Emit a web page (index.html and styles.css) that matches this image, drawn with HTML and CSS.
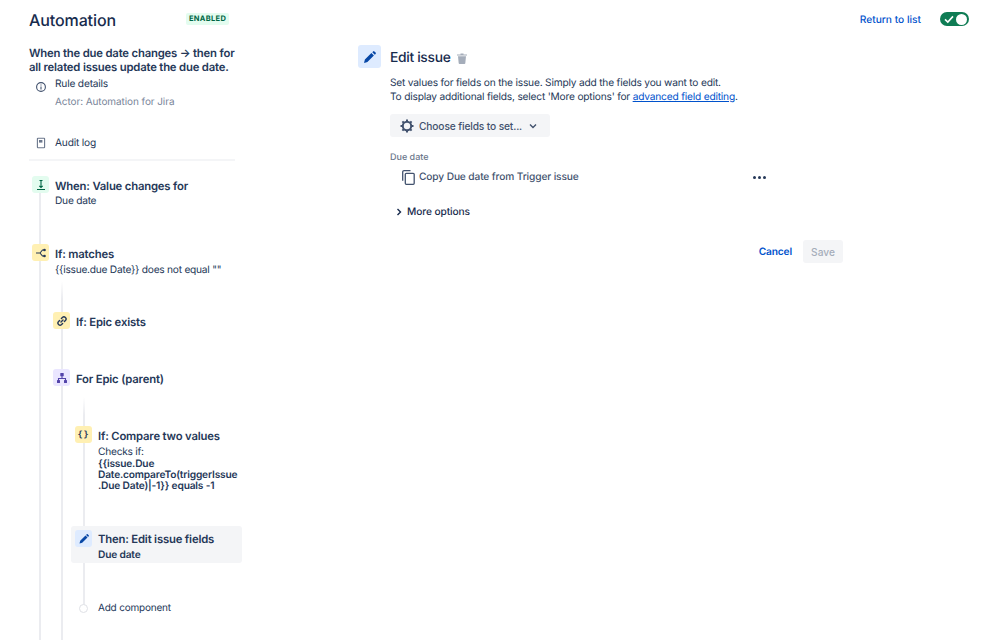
FILE: index.html
```html
<!DOCTYPE html>
<html lang="en">
<head>
<meta charset="utf-8">
<title>Automation</title>
<link rel="stylesheet" href="styles.css">
</head>
<body>
<div class="page">
  <header class="top">
    <div class="top-left">
      <h1 class="app-title">Automation</h1>
      <span class="lozenge">ENABLED</span>
    </div>
    <div class="top-right">
      <a class="link-return">Return to list</a>
      <span class="toggle">
        <svg class="toggle-check" viewBox="0 0 12 12" width="12" height="12"><path d="M2 6.400 4.800 9 10 3.400" fill="none" stroke="#fff" stroke-width="1.600"/></svg>
        <span class="toggle-knob"></span>
      </span>
    </div>
  </header>
  <div class="columns">
    <aside class="side">
      <h2 class="rule-title">When the due date changes → then for all related issues update the due date.</h2>
      <div class="meta-row">
        <svg class="meta-icon" viewBox="0 0 12 12" width="12" height="12"><circle cx="6" cy="6" r="4.400" fill="none" stroke="#42526e" stroke-width="1.100"/><path d="M6 5.400v3M6 3.400v1" stroke="#42526e" stroke-width="1.100"/></svg>
        <div>
          <div class="meta-text">Rule details</div>
          <div class="meta-sub">Actor: Automation for Jira</div>
        </div>
      </div>
      <div class="meta-row audit">
        <svg class="meta-icon" viewBox="0 0 12 12" width="12" height="12"><path d="M3 1.200h6a.6.600 0 0 1 .6.600v8.400a.6.600 0 0 1-.6.600H3a.6.600 0 0 1-.6-.6V1.800a.6.600 0 0 1 .6-.6z" fill="none" stroke="#6b778c" stroke-width="1.100"/><path d="M4 3h3.400v2.600H4z" fill="#6b778c"/></svg>
        <div class="meta-text">Audit log</div>
      </div>
      <div class="divider"></div>

      <div class="tree">
        <div class="node node-trigger">
          <span class="tile tile-green">
            <svg viewBox="0 0 12 12" width="12" height="12"><path d="M2 10.500h8M6 1.500v7M4.300 6.800 6 8.500l1.700-1.700M4.500 1.500h3" fill="none" stroke="#006644" stroke-width="1.100"/></svg>
          </span>
          <div class="node-body">
            <div class="node-title">When: Value changes for</div>
            <div class="node-sub">Due date</div>
          </div>
        </div>

        <div class="node node-match">
          <span class="tile tile-yellow">
            <svg viewBox="0 0 12 12" width="12" height="12"><path d="M1 6h4M5 6l2.500-3H9M5 6l2.500 3H9" fill="none" stroke="#253858" stroke-width="1.100"/><circle cx="9.500" cy="3" r="1.300" fill="#253858"/><circle cx="9.500" cy="9" r="1.300" fill="#253858"/></svg>
          </span>
          <div class="node-body">
            <div class="node-title">If: matches</div>
            <div class="node-sub match-sub">{{issue.due Date}} does not equal ""</div>
          </div>
        </div>

        <div class="branch branch-one">
          <div class="node node-epic">
            <span class="tile tile-yellow">
              <svg viewBox="0 0 12 12" width="12" height="12"><path d="M5 7 7 5M5.400 3.400l1-1a2.100 2.100 0 0 1 3 3l-1 1M6.600 8.600l-1 1a2.100 2.100 0 0 1-3-3l1-1" fill="none" stroke="#253858" stroke-width="1.400" stroke-linecap="round"/></svg>
            </span>
            <div class="node-body"><div class="node-title">If: Epic exists</div></div>
          </div>

          <div class="node node-for">
            <span class="tile tile-purple">
              <svg viewBox="0 0 12 12" width="12" height="12"><path d="M6 4v2.500M2.500 9V6.500h7V9" fill="none" stroke="#5243aa" stroke-width="1.100"/><rect x="4.300" y="1" width="3.400" height="3.200" rx=".5" fill="#5243aa"/><rect x="1" y="8" width="3" height="3" rx=".5" fill="#5243aa"/><rect x="8" y="8" width="3" height="3" rx=".5" fill="#5243aa"/></svg>
            </span>
            <div class="node-body"><div class="node-title">For Epic (parent)</div></div>
          </div>

          <div class="branch branch-two">
            <div class="node node-compare">
              <span class="tile tile-yellow tile-braces">{}</span>
              <div class="node-body">
                <div class="node-title">If: Compare two values</div>
                <div class="node-sub checks">Checks if:</div>
                <div class="node-strong">{{issue.Due<br>Date.compareTo(triggerIssue<br>.Due Date)|-1}} equals -1</div>
              </div>
            </div>

            <div class="node node-then">
              <span class="tile tile-blue">
                <svg viewBox="0 0 12 12" width="12" height="12"><path d="M1.500 10.500l.7-2.700 5.300-5.300 2 2-5.300 5.300zM8.100 1.900l.6-.6a.7.700 0 0 1 1 0l1 1a.7.700 0 0 1 0 1l-.6.600z" fill="#0747a6"/></svg>
              </span>
              <div class="node-body">
                <div class="node-title">Then: Edit issue fields</div>
                <div class="node-strong then-sub">Due date</div>
              </div>
            </div>

            <div class="node node-add">
              <span class="add-dot"></span>
              <div class="add-text">Add component</div>
            </div>
          </div>
        </div>
      </div>
    </aside>

    <main class="main">
      <span class="tile-large">
        <svg viewBox="0 0 14 14" width="14" height="14"><path d="M1 13l.9-3.400 6.500-6.500 2.500 2.500-6.500 6.500zM9.300 2.200l.8-.8a.9.900 0 0 1 1.300 0l1.200 1.200a.9.900 0 0 1 0 1.300l-.8.800z" fill="#0747a6"/></svg>
      </span>
      <div class="panel">
        <div class="panel-head">
          <h2 class="panel-title">Edit issue</h2>
          <svg class="trash" viewBox="0 0 10 11" width="10" height="11"><path d="M0 1.500h10v1H0zM3.500.500h3v1h-3zM1 3.300h8l-.7 6.900a.9.900 0 0 1-.9.800H2.600a.9.900 0 0 1-.9-.8z" fill="#a5adba"/></svg>
        </div>
        <p class="desc">Set values for fields on the issue. Simply add the fields you want to edit.<br>To display additional fields, select 'More options' for <a class="desc-link">advanced field editing</a>.</p>
        <button class="choose" type="button">
          <svg viewBox="0 0 14 14" width="14" height="14"><circle cx="7" cy="7" r="4.200" fill="none" stroke="#42526e" stroke-width="2"/><path d="M7 .5v2.200M7 11.300v2.200M.5 7h2.200M11.300 7h2.200M2.400 2.400l1.600 1.600M10 10l1.600 1.600M2.400 11.600 4 10M10 4l1.600-1.600" stroke="#42526e" stroke-width="2"/></svg>
          <span>Choose fields to set...</span>
          <svg class="chev" viewBox="0 0 8 8" width="8" height="8"><path d="M1 2.500 4 5.500 7 2.500" fill="none" stroke="#42526e" stroke-width="1.400"/></svg>
        </button>
        <div class="field-label">Due date</div>
        <div class="field-row">
          <div class="field-value">
            <svg viewBox="0 0 13 15" width="13" height="15"><path d="M8.500.7H2A1.300 1.300 0 0 0 .7 2v8.800" fill="none" stroke="#42526e" stroke-width="1.300"/><rect x="3.300" y="3.300" width="8.900" height="11" rx="1" fill="none" stroke="#42526e" stroke-width="1.300"/></svg>
            <span>Copy Due date from Trigger issue</span>
          </div>
          <span class="dots"><i></i><i></i><i></i></span>
        </div>
        <div class="more">
          <svg viewBox="0 0 8 8" width="8" height="8"><path d="M2.500 1 5.500 4 2.500 7" fill="none" stroke="#172b4d" stroke-width="1.400"/></svg>
          <span>More options</span>
        </div>
        <div class="actions">
          <a class="cancel">Cancel</a>
          <button class="save" type="button" disabled>Save</button>
        </div>
      </div>
    </main>
  </div>
</div>
</body>
</html>
```

FILE: styles.css
```css
* { box-sizing: border-box; }
html, body { margin: 0; padding: 0; background: #fff; }
body { font-family: Inter, "Liberation Sans", sans-serif; color: #172b4d; text-rendering: geometricPrecision; }
.page { width: 999px; height: 640px; overflow: hidden; }

.top { height: 40px; padding: 0 30px 0 29px; display: flex; justify-content: space-between; align-items: center; }
.top-left { display: flex; align-items: center; gap: 70px; }
.app-title { margin: 0; font-size: 16px; line-height: 20px; font-weight: 500; letter-spacing: -0.1px; }
.lozenge { background: #e3fcef; color: #006644; font-size: 7.500px; font-weight: 700; line-height: 12px; height: 12px; padding: 0 3px; border-radius: 2px; letter-spacing: .3px; margin-top: -3px; }
.top-right { display: flex; align-items: center; gap: 19px; margin-top: -2px; }
.link-return { color: #0052cc; font-size: 10.200px; font-weight: 500; padding-top: 1px; }
.toggle { width: 29px; height: 14px; background: #0f7c54; border-radius: 7px; display: flex; align-items: center; justify-content: space-between; padding: 0 2px 0 3px; }
.toggle-knob { width: 11px; height: 11px; background: #fff; border-radius: 50%; }

.columns { display: flex; }
.side { width: 214px; margin-left: 29px; flex: none; }
.rule-title { width: 210px; margin: 6px 0 0; font-size: 11.300px; letter-spacing: -0.18px; line-height: 14px; font-weight: 600; color: #253858; }
.meta-row { display: flex; gap: 8px; padding-left: 6px; }
.meta-row:not(.audit) { margin-top: 3px; }
.meta-icon { flex: none; margin-top: 4px; }
.meta-text { font-size: 10.200px; letter-spacing: -0.2px; line-height: 14px; color: #253858; }
.meta-sub { font-size: 10px; letter-spacing: -0.08px; line-height: 14px; margin-top: 4px; color: #7a869a; }
.audit { margin-top: 27px; }
.audit .meta-icon { margin-top: 1px; }
.divider { width: 206px; height: 2px; background: #f4f5f7; margin-top: 9px; }

.tree { position: relative; margin-top: 15px; }
.tree::before { content: ""; position: absolute; left: 10px; top: 0; bottom: -200px; width: 2px; background: #ebecf0; }
.node { display: flex; gap: 6px; position: relative; }
.tile { width: 17px; height: 17px; border-radius: 3px; flex: none; display: flex; align-items: center; justify-content: center; }
.node-trigger { margin-left: 3px; }
.node-match { margin-left: 3px; margin-top: 36px; }
.tile-green { background: #e3fcef; }
.tile-yellow { background: #fff0b3; }
.tile-purple { background: #eae6ff; }
.tile-blue { background: #deebff; }
.tile-braces { font-family: "DejaVu Sans Mono", monospace; font-size: 8.500px; font-weight: 700; color: #253858; letter-spacing: 1px; }
.node-title { font-size: 11.300px; letter-spacing: -0.18px; line-height: 15px; font-weight: 600; color: #253858; margin-top: 3px; white-space: nowrap; }
.node-sub { font-size: 10.200px; letter-spacing: -0.25px; line-height: 14px; color: #253858; white-space: nowrap; }
.match-sub { margin-top: 1px; }
.node-strong { font-size: 10.200px; letter-spacing: -0.18px; line-height: 11px; font-weight: 600; color: #253858; white-space: nowrap; }

.branch { position: relative; }
.branch::before { content: ""; position: absolute; top: 0; bottom: -200px; width: 2px; background: linear-gradient(#fff, #ebecf0 18px); }
.branch-one { margin-top: 4px; padding-top: 31px; padding-left: 24px; }
.branch-one::before { left: 32px; }
.node-for { margin-top: 39px; }
.branch-two { margin-top: 10px; padding-top: 29px; padding-left: 22px; }
.branch-two::before { left: 30px; bottom: 8px; }
.checks { line-height: 13px; margin-top: 2px; }
.node-then { margin: 34px 0 0 -4px; width: 171px; height: 37px; background: #f4f5f7; border-radius: 3px; padding: 4px 4px; }
.node-then .node-title { margin-top: 2px; }
.then-sub { margin-top: 2px; line-height: 12px; }
.node-add { margin-top: 38px; align-items: center; gap: 10px; padding-left: 4px; }
.add-dot { width: 9px; height: 9px; border-radius: 50%; border: 1px solid #dfe1e6; background: #fff; flex: none; }
.add-text { font-size: 10px; letter-spacing: -0.2px; line-height: 14px; color: #253858; }

.main { margin-left: 115px; display: flex; gap: 9px; padding-top: 5px; }
.tile-large { width: 23px; height: 23px; background: #deebff; border-radius: 3px; display: flex; align-items: center; justify-content: center; flex: none; }
.panel { width: 453px; }
.panel-head { display: flex; align-items: center; gap: 7px; height: 24px; margin-top: 1px; }
.panel-title { margin: 0; font-size: 13.800px; letter-spacing: -0.3px; line-height: 24px; font-weight: 500; color: #172b4d; }
.desc { margin: 6px 0 0; font-size: 10.200px; letter-spacing: -0.2px; line-height: 14px; color: #253858; white-space: nowrap; }
.desc-link { color: #0052cc; text-decoration: underline; }
.choose { margin-top: 10px; width: 160px; height: 23px; background: #f4f5f7; border: 0; border-radius: 3px; padding: 0 0 0 10px; display: flex; align-items: center; font: inherit; font-size: 10.200px; letter-spacing: -0.13px; font-weight: 500; color: #42526e; }
.choose span { margin-left: 5px; }
.chev { margin-left: 7px; }
.field-label { margin-top: 15px; font-size: 9px; line-height: 12px; font-weight: 500; color: #6b778c; }
.field-row { margin-top: 5px; height: 16px; display: flex; align-items: center; justify-content: space-between; padding-left: 12px; padding-right: 77px; }
.field-value { display: flex; align-items: center; gap: 4px; font-size: 10.200px; letter-spacing: -0.13px; font-weight: 500; color: #42526e; white-space: nowrap; }
.dots { display: flex; gap: 2px; }
.dots i { display: block; width: 3px; height: 3px; border-radius: 50%; background: #253858; }
.more { margin-top: 20px; height: 14px; display: flex; align-items: center; gap: 4px; padding-left: 5px; font-size: 10.200px; letter-spacing: -0.1px; font-weight: 500; color: #172b4d; }
.actions { margin-top: 21px; display: flex; justify-content: flex-end; align-items: center; gap: 11px; }
.cancel { color: #0052cc; font-size: 10.200px; letter-spacing: -0.15px; font-weight: 600; }
.save { width: 40px; height: 23px; background: #f4f5f7; border: 0; border-radius: 3px; font: inherit; font-size: 10.200px; font-weight: 500; color: #a5adba; padding: 0; }
```
